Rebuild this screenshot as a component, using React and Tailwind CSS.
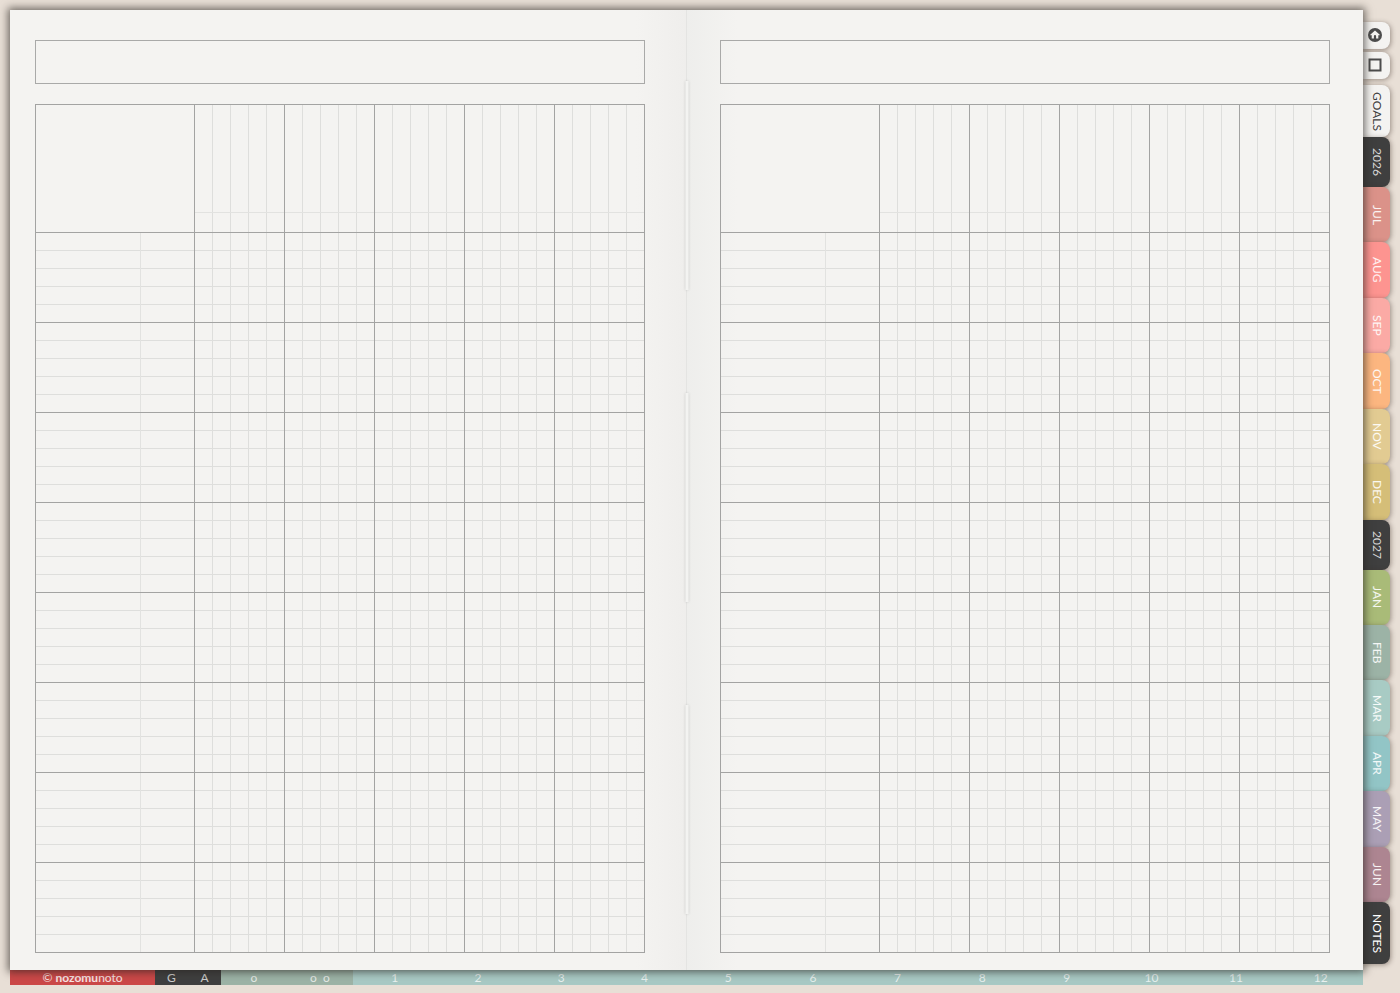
import React from "react";
import clsx from "clsx";

const TABS = [
  { label: "GOALS", className: "h-[52px] bg-[#f4f3f1] text-[#3f3f3f]" },
  { label: "2026", className: "h-[50px] bg-[#3f3f3f] text-[#d8d8d8]" },
  { label: "JUL", className: "flex-1 bg-[#db9289] text-white/90" },
  { label: "AUG", className: "flex-1 bg-[#fd9490] text-white/90" },
  { label: "SEP", className: "flex-1 bg-[#fbaaa5] text-white/90" },
  { label: "OCT", className: "flex-1 bg-[#fcb680] text-white/90" },
  { label: "NOV", className: "flex-1 bg-[#e2cb92] text-white/90" },
  { label: "DEC", className: "flex-1 bg-[#d5be78] text-white/90" },
  { label: "2027", className: "h-[50px] bg-[#3f3f3f] text-[#d8d8d8]" },
  { label: "JAN", className: "flex-1 bg-[#a9bb78] text-white/90" },
  { label: "FEB", className: "flex-1 bg-[#9cb3a6] text-white/90" },
  { label: "MAR", className: "flex-1 bg-[#a8cbc4] text-white/90" },
  { label: "APR", className: "flex-1 bg-[#92c5c6] text-white/90" },
  { label: "MAY", className: "flex-1 bg-[#ab9fb5] text-white/90" },
  { label: "JUN", className: "flex-1 bg-[#ad8591] text-white/90" },
  { label: "NOTES", className: "h-[62px] bg-[#3f3f3f] text-white" },
];

const COLUMNS = [1, 2, 3, 4, 5];
const ROWS = [1, 2, 3, 4, 5, 6, 7, 8];
const LEFT_MONTHS = [1, 2, 3, 4];
const RIGHT_MONTHS = [5, 6, 7, 8, 9, 10, 11, 12];

const cell = "border-t border-l border-[#a3a3a2] bg-origin-border p-0";

function PlannerGrid() {
  return (
    <table className="w-full table-fixed border-separate border-spacing-0 border-r border-b border-[#a3a3a2]">
      <thead>
        <tr className="h-32">
          <td className={clsx(cell, "w-[159px]")} />
          {COLUMNS.map((col) => (
            <td
              key={col}
              className={clsx(
                cell,
                "bg-[linear-gradient(to_right,#dededc_1px,transparent_1px)] bg-size-[20%_100%] align-bottom"
              )}
            >
              <div className="h-5 border-t border-[#e2e2e0]" />
            </td>
          ))}
        </tr>
      </thead>
      <tbody>
        {ROWS.map((row) => (
          <tr key={row} className="h-[90px]">
            <td
              className={clsx(
                cell,
                "h-[90px] bg-[linear-gradient(to_bottom,#dededc_1px,transparent_1px)] bg-size-[100%_20%]"
              )}
            >
              <div className="ml-[104px] h-[89px] border-l border-[#e2e2e0]" />
            </td>
            {COLUMNS.map((col) => (
              <td
                key={col}
                className={clsx(
                  cell,
                  "bg-[linear-gradient(to_right,#dededc_1px,transparent_1px),linear-gradient(to_bottom,#dededc_1px,transparent_1px)] bg-size-[20%_20%]"
                )}
              />
            ))}
          </tr>
        ))}
      </tbody>
    </table>
  );
}

function Page({ className }) {
  return (
    <section className={clsx("min-w-0 flex-1 pt-[30px] pb-[17px]", className)}>
      <div className="mb-5 h-11 border border-[#a9a9a8]" />
      <PlannerGrid />
    </section>
  );
}

// Centre fold with three stitches
function Spine() {
  const stitch = "flex-1 bg-[#f3f3f1] shadow-[0_0_3px_rgba(0,0,0,0.16)]";
  return (
    <div className="relative w-px bg-[#e4e4e2]">
      <div className="absolute inset-y-0 left-1/2 flex w-[3px] -translate-x-1/2 flex-col gap-[103px] pt-[71px] pb-14">
        <span className={stitch} />
        <span className={stitch} />
        <span className={stitch} />
      </div>
    </div>
  );
}

function HomeIcon() {
  return (
    <svg viewBox="0 0 14 14" className="size-[14px]" aria-hidden="true">
      <circle cx="7" cy="7" r="7" fill="#4c4c4c" />
      <path
        d="M7 2.4 2.2 6.8l.7.8.8-.7v3.6h2.2V8.2a1.1 1.1 0 0 1 2.2 0v2.3h2.2V6.9l.8.7.7-.8z"
        fill="#f4f3f1"
      />
    </svg>
  );
}

function SideTabs() {
  const shape =
    "flex w-[27px] items-center justify-center rounded-r-lg shadow-[1px_1px_5px_rgba(60,45,35,0.45)]";
  return (
    <nav className="flex flex-col pt-3 pb-1.5">
      <a href="#home" aria-label="Home" className={clsx(shape, "mb-[3px] h-[27px] bg-[#f4f3f1] pr-1 pb-0.5")}>
        <HomeIcon />
      </a>
      <a href="#index" aria-label="Index" className={clsx(shape, "mb-1.5 h-[27px] bg-[#f4f3f1] pr-1 pb-0.5")}>
        <svg viewBox="0 0 14 14" className="size-[14px]" aria-hidden="true">
          <path d="M1.5 1.5h11v11h-11z" fill="none" stroke="#4c4c4c" strokeWidth="2" />
        </svg>
      </a>
      {TABS.map((tab) => (
        <a
          key={tab.label}
          href={`#${tab.label.toLowerCase()}`}
          className={clsx(shape, "text-[12px] leading-none [writing-mode:vertical-rl]", tab.className)}
        >
          {tab.label}
        </a>
      ))}
    </nav>
  );
}

function MonthLinks({ months }) {
  return (
    <div className="flex bg-[#a8c9c4] text-center">
      {months.map((month) => (
        <a key={month} href={`#month-${month}`} className="flex-1">
          {month}
        </a>
      ))}
    </div>
  );
}

function BottomBar() {
  return (
    <footer className="mr-[27px] grid h-[15px] grid-cols-[145fr_66fr_132fr_333fr_677fr] text-[12px] leading-[15px] text-white/75">
      <a href="#shop" className="bg-[#cb4848] text-center text-white/85">
        © <b className="font-bold">nozomu</b>noto
      </a>
      <div className="flex bg-[#3f3f3f] text-center">
        <a href="#g" className="flex-1">G</a>
        <a href="#a" className="flex-1">A</a>
      </div>
      <div className="flex bg-[#9cb3a6] text-center">
        <a href="#o" className="flex-1">o</a>
        <a href="#oo" className="flex-1">o&nbsp; o</a>
      </div>
      <MonthLinks months={LEFT_MONTHS} />
      <MonthLinks months={RIGHT_MONTHS} />
    </footer>
  );
}

export default function App() {
  return (
    <div className="min-h-screen bg-[#e8dfd6] p-[10px] pb-2 font-['Lato',sans-serif]">
      <div className="flex">
        <main className="relative z-10 flex min-w-0 flex-1 bg-[#f4f3f1] shadow-[0_0_8px_2px_rgba(40,35,30,0.65)]">
          <Page className="bg-[linear-gradient(to_left,#efeeec,#f4f3f1_50px)] pr-[41px] pl-[25px]" />
          <Spine />
          <Page className="bg-[linear-gradient(to_right,#eeeeec,#f4f3f1_50px)] px-[33px]" />
        </main>
        <SideTabs />
      </div>
      <BottomBar />
    </div>
  );
}
